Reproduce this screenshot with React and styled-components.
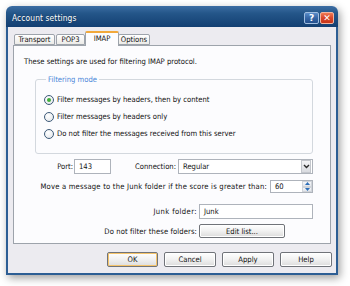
import React from 'react';
import styled, { createGlobalStyle } from 'styled-components';

const Global = createGlobalStyle`
  html, body { margin: 0; padding: 0; background: #ffffff; }
  body {
    font-family: "DejaVu Sans Condensed", "DejaVu Sans", sans-serif;
    font-size: 7.6px;
    color: #111111;
  }
  * { box-sizing: border-box; }
`;

const Page = styled.div`
  width: 350px;
  height: 286px;
  padding: 6px 0 0 6px;
`;

const Window = styled.div`
  width: 332px;
  height: 269px;
  display: flex;
  flex-direction: column;
  border-radius: 6px 6px 0 0;
  box-shadow: 2px 3px 8px rgba(0, 0, 0, 0.38);
`;

const TitleBar = styled.div`
  height: 21px;
  flex: none;
  display: flex;
  align-items: center;
  padding: 6px 4px 3px 6px;
  border-radius: 6px 6px 0 0;
  background: linear-gradient(#3c6da3 0%, #245689 35%, #133f72 100%);
  color: #fff;
`;

const Title = styled.span`
  flex: 1;
  font-size: 8.4px;
  letter-spacing: 0.1px;
  text-shadow: 0 0 2px rgba(0, 0, 0, 0.4);
`;

const CaptionButton = styled.div`
  width: ${p => p.$w}px;
  height: 12px;
  margin-left: 1px;
  border: 1px solid ${p => (p.$close ? '#f2b4a0' : '#9fbde0')};
  border-radius: 2px;
  background: ${p =>
    p.$close
      ? 'linear-gradient(#ef7a55, #d8462a 50%, #c73518)'
      : 'linear-gradient(#5b8cc8, #3566a6 50%, #244f8d)'};
  color: #fff;
  font-family: "DejaVu Sans", sans-serif;
  font-weight: bold;
  font-size: 9px;
  line-height: 10px;
  text-align: center;
`;

const Body = styled.div`
  flex: 1;
  display: flex;
  flex-direction: column;
  background: #ecebf0;
  border: 2px solid #2d5e94;
  border-top: 0;
  padding: 4px 5px 6px 5px;
`;

const TabStrip = styled.div`
  height: 14px;
  display: flex;
  align-items: flex-end;
  padding-left: 1px;
  position: relative;
  z-index: 2;
`;

const Tab = styled.div`
  width: ${p => p.$w}px;
  height: ${p => (p.$active ? 15 : 11)}px;
  margin-bottom: ${p => (p.$active ? -1 : 0)}px;
  margin-left: ${p => (p.$active ? -1 : 0)}px;
  margin-right: ${p => (p.$active ? -1 : 1)}px;
  border: 1px solid #9da3ab;
  border-bottom: ${p => (p.$active ? '0' : '1px solid #9da3ab')};
  border-top: ${p => (p.$active ? '2px solid #f2a93b' : '1px solid #9da3ab')};
  border-radius: 2px 2px 0 0;
  background: ${p => (p.$active ? '#fcfcfe' : 'linear-gradient(#ffffff, #ecebe8)')};
  display: flex;
  align-items: center;
  justify-content: center;
  padding-bottom: ${p => (p.$active ? 2 : 0)}px;
  color: #111111;
`;

const Panel = styled.div`
  height: 199px;
  flex: none;
  background: #fcfcfe;
  border: 1px solid #9da3ab;
  padding: 11px 17px 0 10px;
  display: flex;
  flex-direction: column;
  position: relative;
  z-index: 1;
`;

const Line = styled.div`
  line-height: 9px;
  white-space: nowrap;
`;

const Group = styled.fieldset`
  margin: 9px 0 0 11px;
  padding: 7px 0 11px 8px;
  border: 1px solid #d3d8de;
  border-radius: 3px;
  min-width: 0;
`;

const Legend = styled.legend`
  color: #4a86d8;
  padding: 0 2px;
  margin-left: 2px;
  line-height: 9px;
`;

const RadioRow = styled.label`
  height: 17px;
  display: flex;
  align-items: center;
  gap: 3px;
  white-space: nowrap;
`;

const RadioCircle = styled.span`
  width: 10px;
  height: 10px;
  flex: none;
  border-radius: 50%;
  border: 1px solid #3d5a78;
  background: radial-gradient(circle at 40% 35%, #ffffff, #dfe3e8);
  display: flex;
  align-items: center;
  justify-content: center;
  &::after {
    content: '';
    width: 4px;
    height: 4px;
    border-radius: 50%;
    background: ${p => (p.$checked ? '#3fae3a' : 'transparent')};
  }
`;

const Row = styled.div`
  display: flex;
  align-items: center;
  margin-top: ${p => p.$mt}px;
  height: ${p => p.$h}px;
  justify-content: ${p => (p.$end ? 'flex-end' : 'flex-start')};
  gap: ${p => p.$gap || 0}px;
  white-space: nowrap;
`;

const Label = styled.span`
  width: ${p => (p.$w ? `${p.$w}px` : 'auto')};
  text-align: right;
  flex: none;
  white-space: nowrap;
  letter-spacing: ${p => p.$ls || 0}px;
`;

const Field = styled.div`
  width: ${p => (p.$w ? `${p.$w}px` : 'auto')};
  flex: ${p => (p.$grow ? 1 : 'none')};
  height: 100%;
  border: 1px solid #aeb3bb;
  background: #fff;
  display: flex;
  align-items: center;
  padding-left: 4px;
  position: relative;
`;

const FieldText = styled.span`
  flex: 1;
`;

const DropButton = styled.div`
  width: 10px;
  height: 100%;
  border: 1px solid #c3c6cc;
  background: linear-gradient(#f4f4f6, #d9dbe0);
  display: flex;
  align-items: center;
  justify-content: center;
`;

const Spin = styled.div`
  width: 10px;
  height: 100%;
  display: flex;
  flex-direction: column;
`;

const SpinHalf = styled.div`
  flex: 1;
  display: flex;
  align-items: center;
  justify-content: center;
  background: linear-gradient(#f6f7f9, #e2e5ea);
  border: 1px solid #d0d4da;
`;

const FolderGrid = styled.div`
  display: grid;
  grid-template-columns: 1fr 114px;
  grid-template-rows: 15px 14px;
  column-gap: 2px;
  row-gap: 5px;
  align-items: center;
  margin-top: 11px;
  white-space: nowrap;
`;

const Button = styled.div`
  width: ${p => p.$w}px;
  height: ${p => p.$h || 15}px;
  border: 1px solid #707379;
  border-radius: 2px;
  background: linear-gradient(#ffffff, #f1f1f1 50%, #dcdcdc);
  display: flex;
  align-items: center;
  justify-content: center;
  box-shadow: ${p => (p.$default ? 'inset 0 0 0 1px #f5c46b' : 'inset 0 0 0 1px #ffffff')};
  justify-self: start;
`;

const ButtonRow = styled.div`
  display: flex;
  justify-content: flex-end;
  gap: 6px;
  margin-top: 8px;
  margin-right: -1px;
`;

const Chevron = () => (
  <svg width="7" height="5" viewBox="0 0 7 5">
    <path d="M1 1 L3.5 3.5 L6 1" fill="none" stroke="#2b2b2b" strokeWidth="1.4" />
  </svg>
);

const Arrow = ({ up }) => (
  <svg width="5" height="3" viewBox="0 0 5 3">
    <path d={up ? 'M0 3 L2.5 0 L5 3 Z' : 'M0 0 L2.5 3 L5 0 Z'} fill="#2f6fb8" />
  </svg>
);

export default function App() {
  return (
    <Page>
      <Global />
      <Window>
        <TitleBar>
          <Title>Account settings</Title>
          <CaptionButton $w={15}>?</CaptionButton>
          <CaptionButton $w={14} $close>✕</CaptionButton>
        </TitleBar>
        <Body>
          <TabStrip>
            <Tab $w={41}>Transport</Tab>
            <Tab $w={29}>POP3</Tab>
            <Tab $w={34} $active>IMAP</Tab>
            <Tab $w={32}>Options</Tab>
          </TabStrip>
          <Panel>
            <Line>These settings are used for filtering IMAP protocol.</Line>
            <Group>
              <Legend>Filtering mode</Legend>
              <RadioRow><RadioCircle $checked />Filter messages by headers, then by content</RadioRow>
              <RadioRow><RadioCircle />Filter messages by headers only</RadioRow>
              <RadioRow><RadioCircle />Do not filter the messages received from this server</RadioRow>
            </Group>
            <Row $mt={5} $h={15}>
              <Label $w={49}>Port:</Label>
              <Field $w={37} style={{ marginLeft: 1 }}><FieldText>143</FieldText></Field>
              <Label $w={65}>Connection:</Label>
              <Field $grow style={{ marginLeft: 2, paddingRight: 1 }}>
                <FieldText>Regular</FieldText>
                <DropButton><Chevron /></DropButton>
              </Field>
            </Row>
            <Row $mt={6} $h={13} $end $gap={3}>
              <Label $ls={0.2}>Move a message to the Junk folder if the score is greater than:</Label>
              <Field $w={43}>
                <FieldText>60</FieldText>
                <Spin>
                  <SpinHalf><Arrow up /></SpinHalf>
                  <SpinHalf><Arrow /></SpinHalf>
                </Spin>
              </Field>
            </Row>
            <FolderGrid>
              <Label $ls={0.4}>Junk folder:</Label>
              <Field><FieldText>Junk</FieldText></Field>
              <Label $ls={0.1}>Do not filter these folders:</Label>
              <Button $w={86} $h={14}>Edit list...</Button>
            </FolderGrid>
          </Panel>
          <ButtonRow>
            <Button $w={51} $default>OK</Button>
            <Button $w={52}>Cancel</Button>
            <Button $w={52}>Apply</Button>
            <Button $w={52}>Help</Button>
          </ButtonRow>
        </Body>
      </Window>
    </Page>
  );
}
